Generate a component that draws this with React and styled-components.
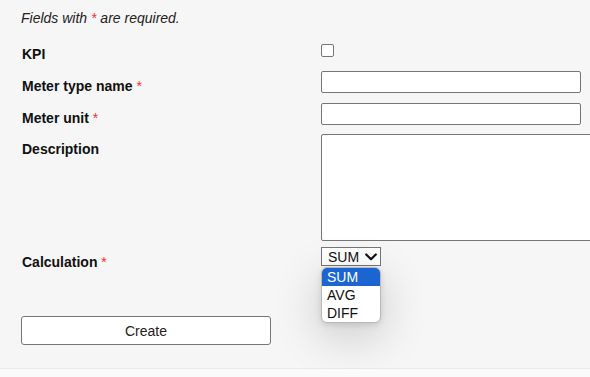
import React from "react";
import styled, { createGlobalStyle } from "styled-components";

const GlobalStyle = createGlobalStyle`
  html, body {
    margin: 0;
    padding: 0;
    background: #fafafa;
    overflow: hidden;
    font-family: "Liberation Sans", Arial, sans-serif;
  }
`;

const Card = styled.div`
  background: #f6f6f6;
  border-bottom: 1px solid #e6ebf2;
  padding: 10px 0 23px 21px;
`;

const Note = styled.p`
  margin: 0;
  font-size: 14px;
  line-height: 16px;
  font-style: italic;
  color: #222;
`;

const Required = styled.span`
  color: #ff2a2a;
  font-weight: normal;
`;

const Form = styled.form`
  display: flex;
  flex-direction: column;
`;

const Row = styled.div`
  display: grid;
  grid-template-columns: 300px minmax(0, 1fr);
  align-items: start;
  margin-top: ${(p) => p.$top}px;
`;

const Label = styled.label`
  display: block;
  font-size: 14px;
  line-height: 16px;
  font-weight: bold;
  color: #111;
  padding-left: 1px;
  padding-top: ${(p) => p.$pad}px;
`;

const ClipCell = styled.div`
  overflow: hidden;
`;

const Checkbox = styled.span`
  display: block;
  width: 13px;
  height: 13px;
  box-sizing: border-box;
  border: 1px solid #767676;
  border-radius: 2px;
  background: #fff;
`;

const TextInput = styled.input`
  display: block;
  box-sizing: border-box;
  width: 260px;
  height: 22px;
  margin: 0;
  border: 1px solid #767676;
  border-radius: 2px;
  background: #fff;
  font: 13.33px "Liberation Sans", Arial, sans-serif;
`;

const TextArea = styled.textarea`
  display: block;
  box-sizing: border-box;
  width: 320px;
  height: 107px;
  margin: 0;
  border: 1px solid #767676;
  border-radius: 2px;
  background: #fff;
  resize: none;
`;

const SelectWrap = styled.div`
  position: relative;
  width: 60px;
`;

const SelectBox = styled.div`
  box-sizing: border-box;
  width: 60px;
  height: 19px;
  border: 1px solid #767676;
  background: #fff;
  display: flex;
  align-items: center;
  justify-content: space-between;
  padding: 0 3px 0 6px;
  font-size: 14px;
  color: #111;
`;

const Dropdown = styled.ul`
  position: absolute;
  top: calc(100% + 1px);
  left: 0;
  width: 60px;
  box-sizing: border-box;
  margin: 0;
  padding: 0;
  list-style: none;
  background: #fff;
  border: 1px solid #b8b8b8;
  border-radius: 6px;
  overflow: hidden;
  box-shadow: 0 12px 48px rgba(0, 0, 0, 0.2), 0 2px 6px rgba(0, 0, 0, 0.12);
  z-index: 2;
`;

const Option = styled.li`
  font-size: 14px;
  line-height: 18px;
  height: 18px;
  padding-left: 5px;
  color: ${(p) => (p.$active ? "#fff" : "#111")};
  background: ${(p) => (p.$active ? "#1a65d1" : "transparent")};
`;

const Button = styled.button`
  display: block;
  box-sizing: border-box;
  width: 250px;
  height: 29px;
  margin-top: ${(p) => p.$top}px;
  border: 1px solid #767676;
  border-radius: 3px;
  background: #fff;
  font: 14px "Liberation Sans", Arial, sans-serif;
  color: #222;
  padding: 0;
`;

const Chevron = () => (
  <svg width="12" height="8" viewBox="0 0 12 8" aria-hidden="true">
    <path d="M1.2 1.5 L6 6.2 L10.8 1.5" fill="none" stroke="#111" strokeWidth="2.2" strokeLinecap="round" strokeLinejoin="round" />
  </svg>
);

export default function App() {
  return (
    <>
      <GlobalStyle />
      <Card>
        <Note>
          Fields with <Required>*</Required> are required.
        </Note>
        <Form onSubmit={(e) => e.preventDefault()}>
          <Row $top={18}>
            <Label $pad={2}>KPI</Label>
            <Checkbox />
          </Row>
          <Row $top={9}>
            <Label $pad={7}>
              Meter type name <Required>*</Required>
            </Label>
            <TextInput type="text" />
          </Row>
          <Row $top={9}>
            <Label $pad={7}>
              Meter unit <Required>*</Required>
            </Label>
            <TextInput type="text" />
          </Row>
          <Row $top={8}>
            <Label $pad={7}>Description</Label>
            <ClipCell>
              <TextArea />
            </ClipCell>
          </Row>
          <Row $top={6}>
            <Label $pad={7}>
              Calculation <Required>*</Required>
            </Label>
            <SelectWrap>
              <SelectBox>
                <span>SUM</span>
                <Chevron />
              </SelectBox>
              <Dropdown>
                <Option $active>SUM</Option>
                <Option>AVG</Option>
                <Option>DIFF</Option>
              </Dropdown>
            </SelectWrap>
          </Row>
          <Button type="button" $top={46}>Create</Button>
        </Form>
      </Card>
    </>
  );
}
